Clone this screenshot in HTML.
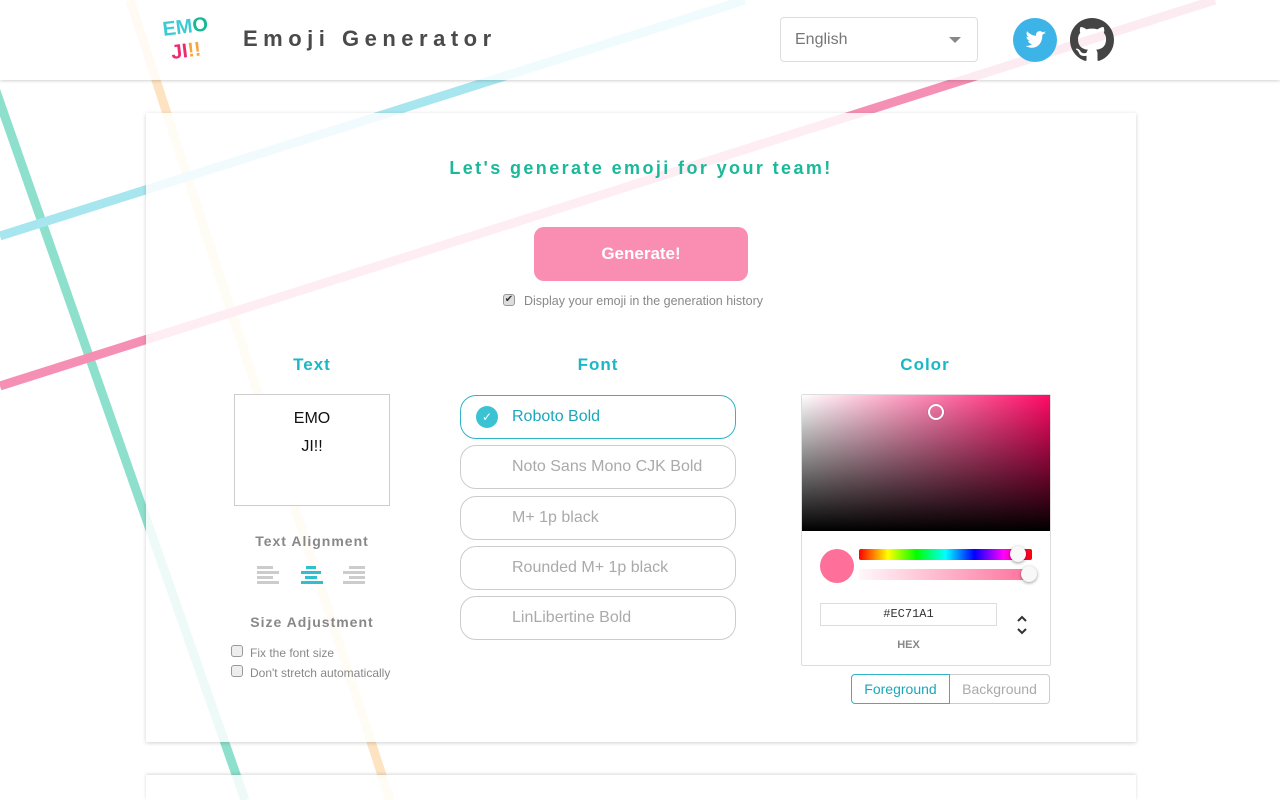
<!DOCTYPE html>
<html style="width:1280px;height:800px;overflow:hidden"><head><meta charset="utf-8"><style>
*{box-sizing:border-box;margin:0;padding:0}
body{width:1280px;height:800px;overflow:hidden;background:#fff;font-family:"Liberation Sans",sans-serif;position:relative}
#bg{position:absolute;left:0;top:0}
.header{position:absolute;left:0;top:0;width:1280px;height:80px;background:rgba(255,255,255,0.82);box-shadow:0 1px 3px rgba(0,0,0,0.18)}
.card{position:absolute;left:146px;top:113px;width:990px;height:629px;background:rgba(255,255,255,0.84);box-shadow:0 1px 4px rgba(0,0,0,0.18)}
.card2{position:absolute;left:146px;top:775px;width:990px;height:25px;background:rgba(255,255,255,0.84);box-shadow:0 -1px 3px rgba(0,0,0,0.15)}
.abs{position:absolute}
.h{color:#19b8c4;font-weight:bold;font-size:17px;letter-spacing:1px;text-align:center}
.font{position:absolute;left:460px;width:276px;height:44px;border:1px solid #ccc;border-radius:16px;color:#aaa;font-size:16px;line-height:42px;padding-left:51px}
.lbl{color:#888;font-weight:bold;font-size:14px;letter-spacing:1px;text-align:center}
.cb{position:absolute;width:12px;height:12px;border:1px solid #999;border-radius:3px;background:#eee}
.small{position:absolute;font-size:12px;color:#888}
</style></head><body>
<svg id="bg" width="1280" height="800">
<line x1="-22" y1="40" x2="245" y2="800" stroke="#8de0cc" stroke-width="9"/>
<line x1="130" y1="0" x2="390" y2="800" stroke="#fde3c2" stroke-width="9"/>
<line x1="0" y1="236" x2="745" y2="0" stroke="#a8e6ef" stroke-width="9"/>
<line x1="0" y1="386" x2="1215" y2="0" stroke="#f590b4" stroke-width="9"/>
</svg>
<div class="header">
 <div class="abs" style="left:164px;top:15px;font-weight:bold;font-size:20px;line-height:24px;transform:rotate(-7deg);font-family:'Liberation Sans',sans-serif">
  <span style="color:#3ccbd4">EM</span><span style="color:#18b894">O</span><br><span style="color:#ee2a72">&nbsp;JI</span><span style="color:#f8a53a">!!</span></div>
 <div class="abs" style="left:243px;top:26px;font-size:22px;font-weight:bold;letter-spacing:5.5px;color:#4a4a4a">Emoji Generator</div>
 <div class="abs" style="left:780px;top:17px;width:198px;height:45px;border:1px solid #ddd;border-radius:4px;background:#fff;font-size:16px;color:#777;padding:13px 14px">English
  <div class="abs" style="left:168px;top:19px;border-left:6px solid transparent;border-right:6px solid transparent;border-top:6px solid #888"></div></div>
 <svg class="abs" style="left:1013px;top:18px" width="44" height="44" viewBox="0 0 44 44"><circle cx="22" cy="22" r="22" fill="#3cb4e8"/><path d="M33 15c-.8.4-1.6.6-2.5.7.9-.5 1.6-1.4 1.9-2.4-.8.5-1.8.9-2.7 1-1.7-1.8-4.6-1.6-6.1.4-.6.9-.8 2-.5 3.1-3.5-.2-6.7-1.8-8.9-4.5-1.2 2-.6 4.5 1.3 5.8-.7 0-1.4-.2-2-.5 0 2.1 1.5 3.9 3.5 4.3-.6.2-1.3.2-2 .1.6 1.8 2.2 3 4.1 3-1.9 1.5-4.2 2.1-6.6 1.9 6.6 4.2 16.2 1.4 16.8-9.7V17c.8-.5 1.4-1.2 1.9-2z" fill="#fff"/></svg>
 <svg class="abs" style="left:1070px;top:18px" width="44" height="44" viewBox="0 0 16 16"><path fill="#444" d="M8 0C3.58 0 0 3.58 0 8c0 3.54 2.29 6.53 5.47 7.59.4.07.55-.17.55-.38 0-.19-.01-.82-.01-1.49-2.01.37-2.53-.49-2.69-.94-.09-.23-.48-.94-.82-1.13-.28-.15-.68-.52-.01-.53.63-.01 1.08.58 1.23.82.72 1.21 1.87.87 2.33.66.07-.52.28-.87.51-1.07-1.78-.2-3.64-.89-3.64-3.950 0-.87.31-1.59.82-2.15-.08-.2-.36-1.02.08-2.12 0 0 .67-.21 2.2.82.64-.18 1.32-.27 2-.27.68 0 1.36.09 2 .27 1.53-1.04 2.2-.82 2.2-.82.44 1.1.16 1.92.08 2.12.51.56.82 1.27.82 2.15 0 3.07-1.87 3.75-3.65 3.95.29.25.54.73.54 1.48 0 1.07-.01 1.93-.01 2.2 0 .21.15.46.55.38A8.013 8.013 0 0016 8c0-4.42-3.58-8-8-8z"/></svg>
</div>
<div class="card"></div>
<div class="card2"></div>
<div class="abs" style="left:146px;width:990px;top:158px;text-align:center;color:#1bb89a;font-weight:bold;font-size:18px;letter-spacing:2.4px">Let's generate emoji for your team!</div>
<div class="abs" style="left:534px;top:227px;width:214px;height:54px;border-radius:10px;background:#f98db2;color:#fff;font-weight:bold;font-size:17px;text-align:center;line-height:54px">Generate!</div>
<div class="cb" style="left:503px;top:294px;background:#ddd;font-size:10px;line-height:10px;text-align:center;color:#333">✔</div>
<div class="small" style="left:524px;top:294px;font-size:12.5px">Display your emoji in the generation history</div>
<div class="abs h" style="left:262px;width:100px;top:355px">Text</div>
<div class="abs h" style="left:548px;width:100px;top:355px">Font</div>
<div class="abs h" style="left:875px;width:100px;top:355px">Color</div>
<div class="abs" style="left:234px;top:394px;width:156px;height:112px;border:1px solid #ccc;background:#fff;text-align:center;font-size:16px;line-height:28px;padding-top:10px;color:#111">EMO<br>JI!!</div>
<div class="abs lbl" style="left:232px;width:160px;top:533px">Text Alignment</div>
<svg class="abs" style="left:257px;top:565px" width="112" height="20">
<g fill="#ccc"><rect x="0" y="1" width="16" height="3"/><rect x="0" y="6" width="22" height="3"/><rect x="0" y="11" width="16" height="3"/><rect x="0" y="16" width="22" height="3"/></g>
<g fill="#2fbfd0"><rect x="49" y="1" width="10" height="3"/><rect x="44" y="6" width="20" height="3"/><rect x="48" y="11" width="12" height="3"/><rect x="44" y="16" width="22" height="3"/></g>
<g fill="#ccc"><rect x="92" y="1" width="16" height="3"/><rect x="86" y="6" width="22" height="3"/><rect x="92" y="11" width="16" height="3"/><rect x="86" y="16" width="22" height="3"/></g>
</svg>
<div class="abs lbl" style="left:232px;width:160px;top:614px">Size Adjustment</div>
<div class="cb" style="left:231px;top:645px"></div><div class="small" style="left:250px;top:646px">Fix the font size</div>
<div class="cb" style="left:231px;top:665px"></div><div class="small" style="left:250px;top:666px">Don't stretch automatically</div>
<div class="font" style="top:395px;border-color:#2fb5c6;color:#1ba7bb;background:#fff">
 <div class="abs" style="left:15px;top:10px;width:22px;height:22px;border-radius:50%;background:#3cc3d3;color:#fff;font-size:12px;line-height:22px;text-align:center;padding:0">✓</div>Roboto Bold</div>
<div class="font" style="top:445px">Noto Sans Mono CJK Bold</div>
<div class="font" style="top:496px">M+ 1p black</div>
<div class="font" style="top:546px">Rounded M+ 1p black</div>
<div class="font" style="top:596px">LinLibertine Bold</div>
<div class="abs" style="left:801px;top:394px;width:250px;height:272px;border:1px solid #ddd;border-radius:2px;background:#fff">
 <div class="abs" style="left:0;top:0;width:248px;height:136px;background:linear-gradient(to top,#000,rgba(0,0,0,0)),linear-gradient(to right,#fff,#ff0a66)"></div>
 <div class="abs" style="left:126px;top:9px;width:16px;height:16px;border:2px solid #fff;border-radius:50%;box-shadow:0 0 1px #555"></div>
 <div class="abs" style="left:18px;top:154px;width:34px;height:34px;border-radius:50%;background:#fe6f9a"></div>
 <div class="abs" style="left:57px;top:154px;width:173px;height:11px;border-radius:2px;background:linear-gradient(to right,red,#ff0,#0f0,#0ff,#00f,#f0f,red)"></div>
 <div class="abs" style="left:208px;top:151px;width:16px;height:16px;border-radius:50%;background:#f8f8f8;box-shadow:0 1px 3px rgba(0,0,0,.4)"></div>
 <div class="abs" style="left:57px;top:174px;width:173px;height:11px;background:linear-gradient(to right,rgba(254,111,154,0.05),#fe6f9a)"></div>
 <div class="abs" style="left:219px;top:171px;width:16px;height:16px;border-radius:50%;background:#f8f8f8;box-shadow:0 1px 3px rgba(0,0,0,.4)"></div>
 <div class="abs" style="left:18px;top:208px;width:177px;height:23px;border:1px solid #ddd;font-family:'Liberation Mono',monospace;font-size:12px;text-align:center;line-height:21px;color:#333">#EC71A1</div>
 <div class="abs" style="left:18px;top:244px;width:177px;text-align:center;font-size:11px;color:#888;font-weight:bold">HEX</div>
 <svg class="abs" style="left:214px;top:219px" width="12" height="22"><path d="M2 7l4-4 4 4M2 15l4 4 4-4" fill="none" stroke="#333" stroke-width="2"/></svg>
</div>
<div class="abs" style="left:851px;top:674px;width:99px;height:30px;border:1px solid #2fb5c6;border-radius:4px 0 0 4px;color:#1ba7bb;font-size:14px;text-align:center;line-height:28px;background:#fff">Foreground</div>
<div class="abs" style="left:950px;top:674px;width:100px;height:30px;border:1px solid #ccc;border-left:none;border-radius:0 4px 4px 0;color:#aaa;font-size:14px;text-align:center;line-height:28px;background:#fff">Background</div>
</body></html>
